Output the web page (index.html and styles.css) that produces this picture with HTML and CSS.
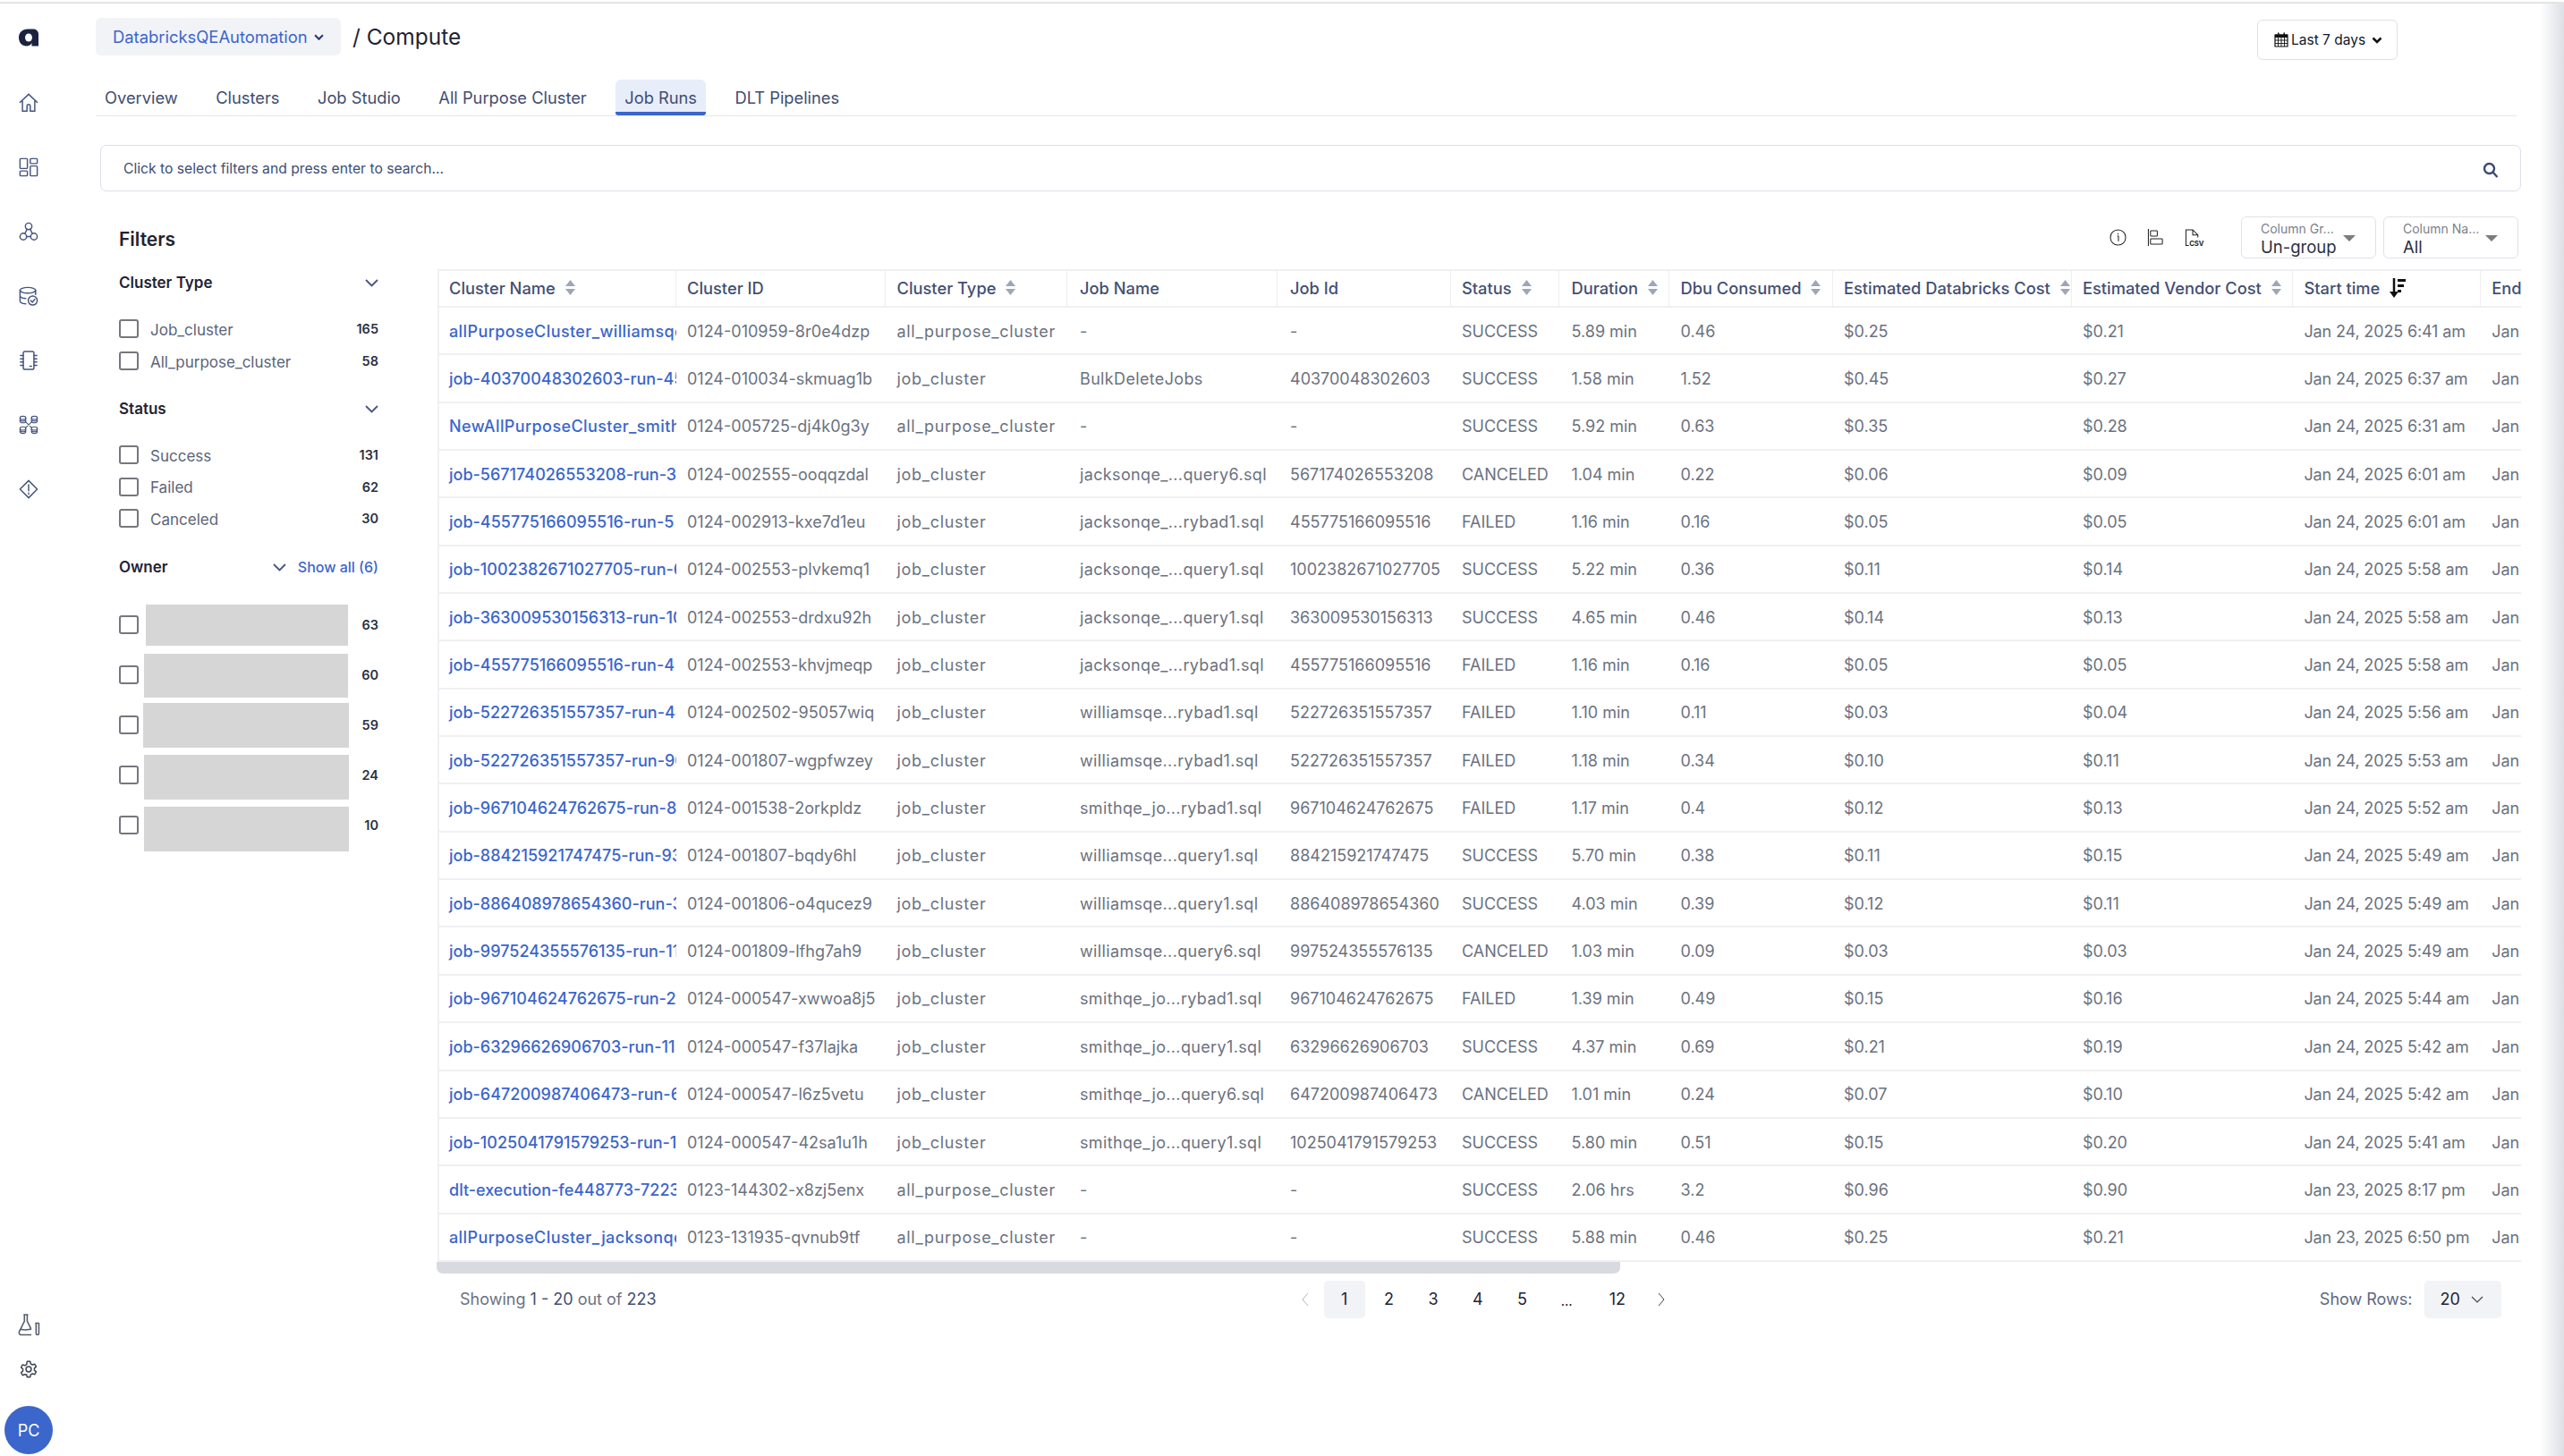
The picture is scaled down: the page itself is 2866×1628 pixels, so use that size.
FILE: index.html
```html
<!DOCTYPE html>
<html lang="en">
<head>
<meta charset="utf-8">
<title>Compute - Job Runs</title>
<link rel="stylesheet" href="styles.css">
</head>
<body>
<div class="topline"></div>
<div class="app">
  <aside class="sidebar">
    <svg class="logo" viewBox="0 0 24 20"><path d="M11 0.500C5 0.500 1 4.500 1 10s3.500 9.500 8.500 9.500c3 0 5-1.500 6-3.500v3.500H23V6c0-3.500-3-5.500-6-5.500z" fill="#1b2340"/><ellipse cx="12" cy="10" rx="4" ry="4.500" fill="#fff"/></svg>
    <nav class="side-nav">
      <svg class="ico" viewBox="0 0 24 24"><path d="M1.500 11.500 12 1.500l10.500 10M4.500 9.500V22H10v-6a2 2 0 0 1 4 0v6h5.500V9.500"/></svg>
      <svg class="ico" viewBox="0 0 24 24"><rect x="1.500" y="1.500" width="9" height="12" rx="1"/><rect x="14" y="1.500" width="8.500" height="6" rx="1"/><rect x="1.500" y="16.500" width="9" height="6" rx="1"/><rect x="14" y="10.500" width="8.500" height="12" rx="1"/></svg>
      <svg class="ico" viewBox="0 0 24 24"><circle cx="12" cy="5.500" r="4"/><circle cx="5.500" cy="18" r="4"/><circle cx="18.500" cy="18" r="4"/><path d="M10 9 7.500 14.500M14 9l2.500 5.500M9.500 18h5"/></svg>
      <svg class="ico" viewBox="0 0 24 24"><ellipse cx="11" cy="5" rx="9.500" ry="3.500"/><path d="M1.500 5v13c0 1.800 3 3.200 7 3.500M1.500 11.500c0 1.800 3 3.200 7 3.500M20.500 5v5"/><circle cx="17" cy="17.500" r="5.500"/><path d="m14.500 17.500 2 2 3-3.500"/></svg>
      <svg class="ico" viewBox="0 0 24 24"><rect x="5.500" y="1" width="13" height="22" rx="2"/><path d="M2 6h3.500M2 10h3.500M2 14h3.500M2 18h3.500M18.500 6H22M18.500 10H22M18.500 14H22M18.500 18H22M13.500 19h2"/></svg>
      <svg class="ico thin" viewBox="0 0 24 24"><ellipse cx="5" cy="3.500" rx="3.500" ry="2"/><path d="M1.500 3.500v4c0 1 1.500 2 3.500 2s3.500-1 3.500-2v-4M1.500 5.500c0 1 1.500 2 3.500 2s3.500-1 3.500-2"/><ellipse cx="19" cy="3.500" rx="3.500" ry="2"/><path d="M15.500 3.500v4c0 1 1.500 2 3.500 2s3.500-1 3.500-2v-4M15.500 5.500c0 1 1.500 2 3.500 2s3.500-1 3.500-2"/><ellipse cx="5" cy="16.500" rx="3.500" ry="2"/><path d="M1.500 16.500v4c0 1 1.500 2 3.500 2s3.500-1 3.500-2v-4M1.500 18.500c0 1 1.500 2 3.500 2s3.500-1 3.500-2"/><ellipse cx="19" cy="16.500" rx="3.500" ry="2"/><path d="M15.500 16.500v4c0 1 1.500 2 3.500 2s3.500-1 3.500-2v-4M15.500 18.500c0 1 1.500 2 3.500 2s3.500-1 3.500-2M8.500 8.500l7 7M15.500 8.500l-7 7"/></svg>
      <svg class="ico" viewBox="0 0 24 24"><path d="M12 1.500 22.500 12 12 22.500 1.500 12z" stroke-linejoin="round"/><path d="M12 6.500v7.500M12 16.500v1.500"/></svg>
    </nav>
    <div class="side-bottom">
      <svg class="ico-flask" viewBox="0 0 24 24"><path d="M6 1h5M7 1v7L1.500 19c-.8 1.800.2 3.500 2 3.500h11M10 1v7l4 8M3 17c2-1 4 1 6.500 0l5-.5"/><path d="M18.500 10h4.500M19.500 10v11a1.200 1.200 0 0 0 3 0V10"/></svg>
      <svg class="ico-gear" viewBox="0 0 24 24"><circle cx="12" cy="12" r="3.500"/><path d="M10 1.500h4l.7 3.200 2.300 1.300 3.100-1 2 3.500-2.400 2.200v2.600l2.400 2.200-2 3.500-3.100-1-2.300 1.300-.7 3.200h-4l-.7-3.200L7 19l-3.100 1-2-3.500 2.400-2.200v-2.600L1.900 9.500l2-3.500 3.100 1 2.300-1.300z" stroke-linejoin="round"/></svg>
      <div class="avatar">PC</div>
    </div>
  </aside>

  <main class="main">
    <header class="topbar">
      <div class="crumb">DatabricksQEAutomation <svg class="crumb-chev" viewBox="0 0 10 6"><path d="m1 1 4 4 4-4"/></svg></div>
      <div class="page-title">/ Compute</div>
      <div class="date-btn">
        <svg class="cal" viewBox="0 0 16 17"><path d="M1 3h14v13H1z" fill="none" stroke="#111" stroke-width="1.200"/><path d="M1 2.500h14V6H1zM4 .5h1.500v3H4zM10.500 .5H12v3h-1.500z" fill="#111"/><path d="M1 9h14M1 12.500h14M4.500 6v10M8 6v10M11.500 6v10" stroke="#111" stroke-width=".9"/></svg>
        <span>Last 7 days</span>
        <svg class="date-chev" viewBox="0 0 12 8"><path d="m1.500 1.500 4.500 4.500 4.500-4.500"/></svg>
      </div>
    </header>

    <div class="tabs">
      <div class="tab">Overview</div>
      <div class="tab">Clusters</div>
      <div class="tab">Job Studio</div>
      <div class="tab">All Purpose Cluster</div>
      <div class="tab active">Job Runs</div>
      <div class="tab">DLT Pipelines</div>
    </div>

    <div class="search">
      <span>Click to select filters and press enter to search...</span>
      <svg class="search-ico" viewBox="0 0 18 18"><circle cx="7.500" cy="7.500" r="5.500"/><path d="m11.500 11.500 5 5.500"/></svg>
    </div>

    <div class="content">
      <section class="filters">
        <h2 class="filters-title">Filters</h2>

        <div class="group-head"><span>Cluster Type</span><svg class="chev" viewBox="0 0 15 9"><path d="m1 1 6.500 6.500L14 1"/></svg></div>
        <div class="options cluster">
          <label class="opt"><i class="box"></i><span>Job_cluster</span><b>165</b></label>
          <label class="opt"><i class="box"></i><span>All_purpose_cluster</span><b>58</b></label>
        </div>

        <div class="group-head"><span>Status</span><svg class="chev" viewBox="0 0 15 9"><path d="m1 1 6.500 6.500L14 1"/></svg></div>
        <div class="options">
          <label class="opt"><i class="box"></i><span>Success</span><b>131</b></label>
          <label class="opt"><i class="box"></i><span>Failed</span><b>62</b></label>
          <label class="opt"><i class="box"></i><span>Canceled</span><b>30</b></label>
        </div>

        <div class="group-head owner"><span>Owner</span><svg class="chev" viewBox="0 0 15 9"><path d="m1 1 6.500 6.500L14 1"/></svg><a class="show-all">Show all (6)</a></div>
        <div class="owners">
          <div class="owner-row"><i class="box"></i><div class="redact r1"></div><b>63</b></div>
          <div class="owner-row"><i class="box"></i><div class="redact r2"></div><b>60</b></div>
          <div class="owner-row"><i class="box"></i><div class="redact r3"></div><b>59</b></div>
          <div class="owner-row"><i class="box"></i><div class="redact r4"></div><b>24</b></div>
          <div class="owner-row"><i class="box"></i><div class="redact r5"></div><b>10</b></div>
        </div>
      </section>

      <section class="results">
        <div class="toolbar">
          <svg class="tool" viewBox="0 0 20 20"><circle cx="10" cy="10" r="9"/><path d="M9 8.500h1.500v6M10 5v1.500"/></svg>
          <svg class="tool" viewBox="0 0 20 20"><path d="M1.500 0v20"/><rect x="4" y="2" width="8" height="6.500" rx="1"/><rect x="4" y="11.500" width="14" height="6.500" rx="1"/></svg>
          <svg class="tool" viewBox="0 0 20 20"><path d="M5 19.500H1.500V1h8l6 6v3M9.500 1v6h6"/><text x="5.500" y="19.500" class="csv">CSV</text></svg>
          <div class="select first"><small>Column Gr...</small><span>Un-group</span><i class="caret"></i></div>
          <div class="select"><small>Column Na...</small><span>All</span><i class="caret"></i></div>
        </div>

        <div class="table">
          <div class="tr head">
            <div class="th">Cluster Name<svg class="sort" viewBox="0 0 11 17"><path d="M5.500 0 11 7H0zM5.500 17 0 10h11z"/></svg></div>
            <div class="th">Cluster ID</div>
            <div class="th">Cluster Type<svg class="sort" viewBox="0 0 11 17"><path d="M5.500 0 11 7H0zM5.500 17 0 10h11z"/></svg></div>
            <div class="th">Job Name</div>
            <div class="th">Job Id</div>
            <div class="th">Status<svg class="sort" viewBox="0 0 11 17"><path d="M5.500 0 11 7H0zM5.500 17 0 10h11z"/></svg></div>
            <div class="th">Duration<svg class="sort" viewBox="0 0 11 17"><path d="M5.500 0 11 7H0zM5.500 17 0 10h11z"/></svg></div>
            <div class="th">Dbu Consumed<svg class="sort" viewBox="0 0 11 17"><path d="M5.500 0 11 7H0zM5.500 17 0 10h11z"/></svg></div>
            <div class="th">Estimated Databricks Cost<svg class="sort" viewBox="0 0 11 17"><path d="M5.500 0 11 7H0zM5.500 17 0 10h11z"/></svg></div>
            <div class="th">Estimated Vendor Cost<svg class="sort" viewBox="0 0 11 17"><path d="M5.500 0 11 7H0zM5.500 17 0 10h11z"/></svg></div>
            <div class="th">Start time<svg class="sort-active" viewBox="0 0 18 24"><path d="M5 1v18" stroke="#111" stroke-width="2.500" fill="none"/><path d="M0 16h10l-5 7z" fill="#111"/><path d="M9 2h9v3H9zM9 8h7v3H9zM9 14h4v3H9z" fill="#111"/></svg></div>
            <div class="th">End time</div>
          </div>

          <div class="tr"><a class="td link wide">allPurposeCluster_williamsqe</a><div class="td">0124-010959-8r0e4dzp</div><div class="td">all_purpose_cluster</div><div class="td">-</div><div class="td">-</div><div class="td">SUCCESS</div><div class="td">5.89 min</div><div class="td">0.46</div><div class="td">$0.25</div><div class="td">$0.21</div><div class="td">Jan 24, 2025 6:41 am</div><div class="td">Jan 24, 2025 6:47 am</div></div>
          <div class="tr"><a class="td link">job-40370048302603-run-45</a><div class="td">0124-010034-skmuag1b</div><div class="td">job_cluster</div><div class="td">BulkDeleteJobs</div><div class="td">40370048302603</div><div class="td">SUCCESS</div><div class="td">1.58 min</div><div class="td">1.52</div><div class="td">$0.45</div><div class="td">$0.27</div><div class="td">Jan 24, 2025 6:37 am</div><div class="td">Jan 24, 2025 6:39 am</div></div>
          <div class="tr"><a class="td link wide">NewAllPurposeCluster_smith</a><div class="td">0124-005725-dj4k0g3y</div><div class="td">all_purpose_cluster</div><div class="td">-</div><div class="td">-</div><div class="td">SUCCESS</div><div class="td">5.92 min</div><div class="td">0.63</div><div class="td">$0.35</div><div class="td">$0.28</div><div class="td">Jan 24, 2025 6:31 am</div><div class="td">Jan 24, 2025 6:37 am</div></div>
          <div class="tr"><a class="td link">job-567174026553208-run-3</a><div class="td">0124-002555-ooqqzdal</div><div class="td">job_cluster</div><div class="td">jacksonqe_...query6.sql</div><div class="td">567174026553208</div><div class="td">CANCELED</div><div class="td">1.04 min</div><div class="td">0.22</div><div class="td">$0.06</div><div class="td">$0.09</div><div class="td">Jan 24, 2025 6:01 am</div><div class="td">Jan 24, 2025 6:02 am</div></div>
          <div class="tr"><a class="td link">job-455775166095516-run-5</a><div class="td">0124-002913-kxe7d1eu</div><div class="td">job_cluster</div><div class="td">jacksonqe_...rybad1.sql</div><div class="td">455775166095516</div><div class="td">FAILED</div><div class="td">1.16 min</div><div class="td">0.16</div><div class="td">$0.05</div><div class="td">$0.05</div><div class="td">Jan 24, 2025 6:01 am</div><div class="td">Jan 24, 2025 6:02 am</div></div>
          <div class="tr"><a class="td link">job-1002382671027705-run-6</a><div class="td">0124-002553-plvkemq1</div><div class="td">job_cluster</div><div class="td">jacksonqe_...query1.sql</div><div class="td">1002382671027705</div><div class="td">SUCCESS</div><div class="td">5.22 min</div><div class="td">0.36</div><div class="td">$0.11</div><div class="td">$0.14</div><div class="td">Jan 24, 2025 5:58 am</div><div class="td">Jan 24, 2025 6:03 am</div></div>
          <div class="tr"><a class="td link">job-363009530156313-run-10</a><div class="td">0124-002553-drdxu92h</div><div class="td">job_cluster</div><div class="td">jacksonqe_...query1.sql</div><div class="td">363009530156313</div><div class="td">SUCCESS</div><div class="td">4.65 min</div><div class="td">0.46</div><div class="td">$0.14</div><div class="td">$0.13</div><div class="td">Jan 24, 2025 5:58 am</div><div class="td">Jan 24, 2025 6:03 am</div></div>
          <div class="tr"><a class="td link">job-455775166095516-run-4</a><div class="td">0124-002553-khvjmeqp</div><div class="td">job_cluster</div><div class="td">jacksonqe_...rybad1.sql</div><div class="td">455775166095516</div><div class="td">FAILED</div><div class="td">1.16 min</div><div class="td">0.16</div><div class="td">$0.05</div><div class="td">$0.05</div><div class="td">Jan 24, 2025 5:58 am</div><div class="td">Jan 24, 2025 5:59 am</div></div>
          <div class="tr"><a class="td link">job-522726351557357-run-44</a><div class="td">0124-002502-95057wiq</div><div class="td">job_cluster</div><div class="td">williamsqe...rybad1.sql</div><div class="td">522726351557357</div><div class="td">FAILED</div><div class="td">1.10 min</div><div class="td">0.11</div><div class="td">$0.03</div><div class="td">$0.04</div><div class="td">Jan 24, 2025 5:56 am</div><div class="td">Jan 24, 2025 5:57 am</div></div>
          <div class="tr"><a class="td link">job-522726351557357-run-90</a><div class="td">0124-001807-wgpfwzey</div><div class="td">job_cluster</div><div class="td">williamsqe...rybad1.sql</div><div class="td">522726351557357</div><div class="td">FAILED</div><div class="td">1.18 min</div><div class="td">0.34</div><div class="td">$0.10</div><div class="td">$0.11</div><div class="td">Jan 24, 2025 5:53 am</div><div class="td">Jan 24, 2025 5:54 am</div></div>
          <div class="tr"><a class="td link">job-967104624762675-run-8</a><div class="td">0124-001538-2orkpldz</div><div class="td">job_cluster</div><div class="td">smithqe_jo...rybad1.sql</div><div class="td">967104624762675</div><div class="td">FAILED</div><div class="td">1.17 min</div><div class="td">0.4</div><div class="td">$0.12</div><div class="td">$0.13</div><div class="td">Jan 24, 2025 5:52 am</div><div class="td">Jan 24, 2025 5:53 am</div></div>
          <div class="tr"><a class="td link">job-884215921747475-run-93</a><div class="td">0124-001807-bqdy6hl</div><div class="td">job_cluster</div><div class="td">williamsqe...query1.sql</div><div class="td">884215921747475</div><div class="td">SUCCESS</div><div class="td">5.70 min</div><div class="td">0.38</div><div class="td">$0.11</div><div class="td">$0.15</div><div class="td">Jan 24, 2025 5:49 am</div><div class="td">Jan 24, 2025 5:54 am</div></div>
          <div class="tr"><a class="td link">job-886408978654360-run-3</a><div class="td">0124-001806-o4qucez9</div><div class="td">job_cluster</div><div class="td">williamsqe...query1.sql</div><div class="td">886408978654360</div><div class="td">SUCCESS</div><div class="td">4.03 min</div><div class="td">0.39</div><div class="td">$0.12</div><div class="td">$0.11</div><div class="td">Jan 24, 2025 5:49 am</div><div class="td">Jan 24, 2025 5:53 am</div></div>
          <div class="tr"><a class="td link">job-997524355576135-run-11</a><div class="td">0124-001809-lfhg7ah9</div><div class="td">job_cluster</div><div class="td">williamsqe...query6.sql</div><div class="td">997524355576135</div><div class="td">CANCELED</div><div class="td">1.03 min</div><div class="td">0.09</div><div class="td">$0.03</div><div class="td">$0.03</div><div class="td">Jan 24, 2025 5:49 am</div><div class="td">Jan 24, 2025 5:50 am</div></div>
          <div class="tr"><a class="td link">job-967104624762675-run-2</a><div class="td">0124-000547-xwwoa8j5</div><div class="td">job_cluster</div><div class="td">smithqe_jo...rybad1.sql</div><div class="td">967104624762675</div><div class="td">FAILED</div><div class="td">1.39 min</div><div class="td">0.49</div><div class="td">$0.15</div><div class="td">$0.16</div><div class="td">Jan 24, 2025 5:44 am</div><div class="td">Jan 24, 2025 5:45 am</div></div>
          <div class="tr"><a class="td link">job-63296626906703-run-11</a><div class="td">0124-000547-f37lajka</div><div class="td">job_cluster</div><div class="td">smithqe_jo...query1.sql</div><div class="td">63296626906703</div><div class="td">SUCCESS</div><div class="td">4.37 min</div><div class="td">0.69</div><div class="td">$0.21</div><div class="td">$0.19</div><div class="td">Jan 24, 2025 5:42 am</div><div class="td">Jan 24, 2025 5:46 am</div></div>
          <div class="tr"><a class="td link">job-647200987406473-run-6</a><div class="td">0124-000547-l6z5vetu</div><div class="td">job_cluster</div><div class="td">smithqe_jo...query6.sql</div><div class="td">647200987406473</div><div class="td">CANCELED</div><div class="td">1.01 min</div><div class="td">0.24</div><div class="td">$0.07</div><div class="td">$0.10</div><div class="td">Jan 24, 2025 5:42 am</div><div class="td">Jan 24, 2025 5:43 am</div></div>
          <div class="tr"><a class="td link">job-1025041791579253-run-1</a><div class="td">0124-000547-42sa1u1h</div><div class="td">job_cluster</div><div class="td">smithqe_jo...query1.sql</div><div class="td">1025041791579253</div><div class="td">SUCCESS</div><div class="td">5.80 min</div><div class="td">0.51</div><div class="td">$0.15</div><div class="td">$0.20</div><div class="td">Jan 24, 2025 5:41 am</div><div class="td">Jan 24, 2025 5:47 am</div></div>
          <div class="tr"><a class="td link">dlt-execution-fe448773-7223</a><div class="td">0123-144302-x8zj5enx</div><div class="td">all_purpose_cluster</div><div class="td">-</div><div class="td">-</div><div class="td">SUCCESS</div><div class="td">2.06 hrs</div><div class="td">3.2</div><div class="td">$0.96</div><div class="td">$0.90</div><div class="td">Jan 23, 2025 8:17 pm</div><div class="td">Jan 23, 2025 10:21 pm</div></div>
          <div class="tr"><a class="td link wide">allPurposeCluster_jacksonqe</a><div class="td">0123-131935-qvnub9tf</div><div class="td">all_purpose_cluster</div><div class="td">-</div><div class="td">-</div><div class="td">SUCCESS</div><div class="td">5.88 min</div><div class="td">0.46</div><div class="td">$0.25</div><div class="td">$0.21</div><div class="td">Jan 23, 2025 6:50 pm</div><div class="td">Jan 23, 2025 6:56 pm</div></div>
        </div>

        <div class="scroll-track"><div class="scroll-thumb"></div></div>

        <div class="pager-row">
          <div class="showing">Showing <em>1 - 20</em> out of <em>223</em></div>
          <div class="pager">
            <svg class="pg-arrow prev" viewBox="0 0 8 16"><path d="M7 1 1 8l6 7"/></svg>
            <div class="pg current">1</div>
            <div class="pg">2</div>
            <div class="pg">3</div>
            <div class="pg">4</div>
            <div class="pg">5</div>
            <div class="pg dots">...</div>
            <div class="pg twelve">12</div>
            <svg class="pg-arrow next" viewBox="0 0 8 16"><path d="m1 1 6 7-6 7"/></svg>
          </div>
          <div class="rows-ctl">
            <span class="rows-label">Show Rows:</span>
            <div class="rows-select">20 <svg viewBox="0 0 14 8"><path d="m1 1 6 6 6-6"/></svg></div>
          </div>
        </div>
      </section>
    </div>
  </main>
  <div class="edge-shadow"></div>
</div>
</body>
</html>
```

FILE: styles.css
```css
* { box-sizing: border-box; }
html, body { margin: 0; padding: 0; background: #fff; }
body {
  width: 2866px;
  height: 1628px;
  overflow: hidden;
  font-family: Inter, "Liberation Sans", sans-serif;
  color: #1f2433;
  position: relative;
}
.topline { margin-top: 2px; height: 2px; background: #e4e4e4; }
.app { display: flex; height: 1624px; }

/* sidebar */
.sidebar {
  width: 64px;
  flex: none;
  display: flex;
  flex-direction: column;
  align-items: center;
  padding: 28px 0 2px;
}
.logo { width: 24px; height: 20px; display: block; }
.side-nav { display: flex; flex-direction: column; gap: 50px; margin-top: 52px; }
.ico { width: 22px; height: 22px; display: block; fill: none; stroke: #46557e; stroke-width: 1.600; stroke-linecap: round; }
.ico.thin { stroke-width: 1.250; }
.side-bottom { margin-top: auto; display: flex; flex-direction: column; align-items: center; }
.ico-flask { width: 25px; height: 25px; fill: none; stroke: #555c6c; stroke-width: 1.500; }
.ico-gear { width: 20px; height: 20px; margin-top: 27px; fill: none; stroke: #3f4452; stroke-width: 1.800; }
.avatar {
  width: 54px; height: 54px; margin-top: 31px; border-radius: 50%;
  background: #3b66cc; color: #fff; font-size: 18px;
  display: flex; align-items: center; justify-content: center;
}

/* main */
.main { flex: 1; min-width: 0; padding: 16px 48px 0 43px; }
.topbar { display: flex; align-items: flex-start; height: 46px; }
.crumb {
  height: 42px; width: 274px; padding-left: 19px;
  background: #f2f3f7; border-radius: 6px;
  color: #3b66cc; font-size: 18.400px;
  display: flex; align-items: center; gap: 7px;
}
.crumb-chev { width: 11px; height: 7px; fill: none; stroke: #2b3d70; stroke-width: 2; }
.page-title { margin-left: 13px; font-size: 24.500px; line-height: 42px; color: #1f2433; }
.date-btn {
  margin-left: auto; margin-right: 138px; margin-top: 2px;
  width: 157px; height: 45px;
  border: 1px solid #dfe1e8; border-radius: 6px;
  display: flex; align-items: center; padding-left: 18px;
  font-size: 15.500px; color: #111827;
}
.cal { width: 16px; height: 17px; margin-right: 3px; flex: none; }
.date-chev { width: 12px; height: 8px; margin-left: 7px; fill: none; stroke: #111; stroke-width: 2.500; }

.tabs { display: flex; gap: 22.500px; margin: 23px 5px 0 0; height: 41px; border-bottom: 1px solid #e5e7ec; }
.tab {
  height: 40px; padding: 0 10px; border-radius: 6px 6px 0 0;
  font-size: 18.300px; font-weight: 400; color: #404d73;
  display: flex; align-items: center;
}
.tab.active { background: #e8edfa; border-bottom: 4px solid #3b66cc; border-radius: 6px 6px 3px 3px; padding-top: 4px; }

.search {
  margin: 32px 0 0 5px; height: 52px;
  border: 1px solid #dcdfe9; border-radius: 7px;
  display: flex; align-items: center; justify-content: space-between;
  padding: 0 24px 0 25px;
  font-size: 15.700px; color: #404d73;
}
.search-ico { width: 18px; height: 18px; margin-top: 3px; fill: none; stroke: #3b4a74; stroke-width: 2.400; }

.content { display: flex; align-items: flex-start; }

/* filters */
.filters { width: 382px; flex: none; padding: 41px 66px 0 26px; }
.filters-title { margin: 0; font-size: 21px; font-weight: 600; line-height: 26px; color: #1f2433; }
.group-head {
  margin-top: 24px; height: 22px;
  display: flex; align-items: center; justify-content: space-between;
  font-size: 17px; font-weight: 600; color: #1f2433;
}
.options + .group-head { margin-top: 32px; }
.group-head.owner { margin-top: 33px !important; }
.group-head.owner .chev { margin-left: auto; }
.chev { width: 15px; height: 9px; fill: none; stroke: #46557e; stroke-width: 1.800; }
.show-all { margin-left: 13px; color: #3b66cc; font-size: 16px; font-weight: 500; }
.options { margin-top: 30px; display: flex; flex-direction: column; gap: 14.500px; }
.options.cluster { gap: 15px; }
.opt { display: flex; align-items: center; height: 21px; font-size: 17px; color: #5b6478; }
.opt span { margin-left: 13px; padding-top: 2px; }
.opt b, .owner-row b { margin-left: auto; font-size: 14.500px; font-weight: 600; color: #2b3040; }
.box { width: 22px; height: 21px; flex: none; border: 2px solid #75777f; border-radius: 3px; background: #fff; display: block; }
.owners { margin-top: 25px; }
.owner-row { height: 56px; display: flex; align-items: center; }
.redact { align-self: flex-start; background: #d6d6d6; flex: none; }
.r1 { margin: 6px 0 0 8px; width: 226px; height: 45.500px; }
.r2 { margin: 5px 0 0 6px; width: 228px; height: 48.500px; }
.r3 { margin: 4px 0 0 5px; width: 229.500px; height: 50px; }
.r4 { margin: 6px 0 0 6px; width: 229px; height: 50px; }
.r5 { margin: 8px 0 0 6px; width: 229px; height: 50px; }

/* results */
.results { flex: 1; min-width: 0; }
.toolbar { margin-top: 28px; height: 47px; padding-right: 3px; display: flex; align-items: center; justify-content: flex-end; gap: 23px; }
.tool { width: 19px; height: 19px; overflow: visible; fill: none; stroke: #222; stroke-width: 1.100; }
.csv { font-family: Inter, sans-serif; font-size: 8px; font-weight: 700; fill: #222; stroke: none; }
.select {
  position: relative; width: 151px; height: 47px; margin-left: -15px;
  border: 1px solid #dfe1e8; border-radius: 6px; padding: 5px 0 0 21px;
  display: flex; flex-direction: column;
}
.select.first { margin-left: 21px; }
.select small { font-size: 14px; line-height: 16px; color: #7b7f8a; }
.select span { font-size: 18.500px; line-height: 25px; color: #2b3040; }
.caret {
  position: absolute; right: 22px; top: 20px; width: 0; height: 0;
  border-left: 7px solid transparent; border-right: 7px solid transparent; border-top: 7px solid #7c7c7c;
}

.table { margin-top: 12px; border-left: 2px solid #eff0f3; overflow: hidden; }
.tr {
  display: grid;
  grid-template-columns: 264.500px 234.500px 203px 235px 193.500px 121px 123.500px 182.500px 267px 247.500px 209.700px 240px;
  height: 53.350px;
  border-bottom: 2px solid #eff0f3;
  align-items: stretch;
}
.tr.head { height: 43px; border-top: 2px solid #eff0f3; }
.th {
  display: flex; align-items: center; gap: 11px;
  padding: 0 0 2px 12.500px;
  border-right: 1px solid #eceef1;
  font-size: 18.300px; font-weight: 500; color: #434f73;
  white-space: nowrap; overflow: hidden;
}
.th:first-child { padding-left: 11px; }
.sort { width: 11px; height: 17px; flex: none; fill: #a0a5b8; }
.sort-active { width: 18px; height: 24px; flex: none; }
.td {
  display: flex; align-items: center;
  padding: 1px 0 0 12.500px;
  font-size: 18px; color: #6b7280;
  white-space: nowrap; overflow: hidden;
}
.td.link { padding-left: 11px; color: #3b66cc; font-weight: 500; }
.td.wide { letter-spacing: .4px; }
.td:nth-child(3) { letter-spacing: .7px; }
.td:nth-child(4) { letter-spacing: .35px; }
.td:nth-child(4), .td:nth-child(5), .th:nth-child(4), .th:nth-child(5), .td:nth-child(7), .th:nth-child(7) { padding-left: 14px; }
.td:nth-child(11) { letter-spacing: -.15px; }

.scroll-track { height: 13px; }
.scroll-thumb { width: 1323px; height: 13px; margin-left: -1px; background: #d9dadf; border-radius: 0 0 7px 7px; }

.pager-row { margin-top: 8px; height: 42px; display: grid; grid-template-columns: 947px auto 1fr; align-items: center; }
.showing { padding-left: 25px; font-size: 18px; color: #6b7280; }
.showing em { font-style: normal; color: #434f73; }
.pager { display: flex; align-items: center; gap: 3.700px; }
.pg { width: 46px; height: 42px; border-radius: 5px; display: flex; align-items: center; justify-content: center; font-size: 18px; color: #1f2433; }
.pg.current { background: #f2f3f7; }
.pg.dots { align-items: flex-end; padding-bottom: 10px; font-size: 15px; }
.pg.twelve { margin-left: 7px; }
.pg-arrow { width: 46px; height: 16px; fill: none; stroke: #3f4452; stroke-width: 1; }
.pg-arrow.prev { stroke: #b0b3bd; margin-right: -6px; }
.pg-arrow.next { margin-left: -1px; }
.rows-ctl { justify-self: end; display: flex; align-items: center; margin-right: 22px; }
.rows-label { font-size: 18px; color: #5d6883; }
.rows-select {
  margin-left: 13px; width: 86.500px; height: 42px; border-radius: 5px;
  background: #f2f3f7; display: flex; align-items: center; padding-left: 18px;
  font-size: 18px; color: #1f2433;
}
.rows-select svg { width: 14px; height: 8px; margin-left: 12px; fill: none; stroke: #3f4452; stroke-width: 1.200; }

.edge-shadow {
  position: absolute; top: 4px; right: 0; bottom: 0; width: 27px;
  background: linear-gradient(to right, rgba(220,223,228,0), #dcdfe4);
}
```
